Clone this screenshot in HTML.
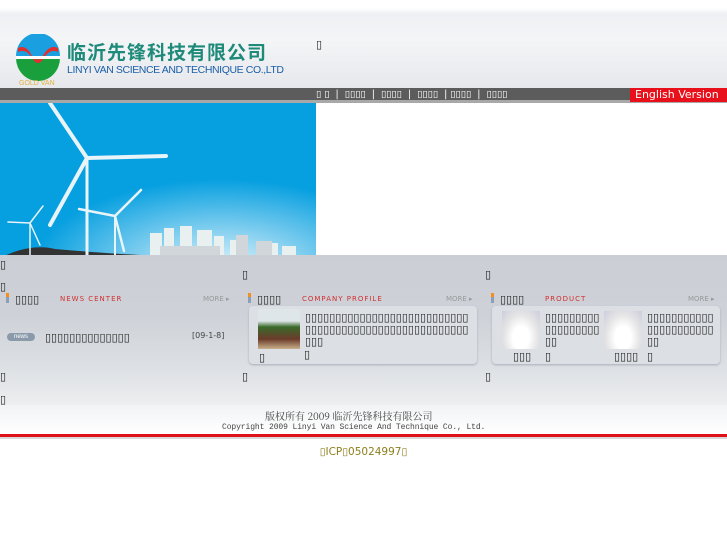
<!DOCTYPE html>
<html><head><meta charset="utf-8"><style>
*{margin:0;padding:0;box-sizing:border-box}
body{width:727px;height:545px;background:#fff;font-family:"Liberation Sans","DejaVu Sans",sans-serif;position:relative;overflow:hidden;font-size:11px;color:#222}
.a{position:absolute}
.t{font-family:"DejaVu Sans",sans-serif;white-space:nowrap}
</style></head><body>
<div class="a" style="left:0;top:0;width:727px;height:88px;background:linear-gradient(#fff 0,#fff 8px,#eef0f3 14px,#f4f5f7 40px,#e6e8ec 88px)"></div>
<svg class="a" style="left:14px;top:34px" width="50" height="52" viewBox="0 0 50 52">
<ellipse cx="24" cy="24" rx="22" ry="23" fill="#19a03c"/>
<path d="M2 22A22 23 0 0 1 46 22Z" fill="#1aa0e0"/>
<path d="M4 14Q12 10 18 22Q24 30 30 20Q36 10 44 14L44 18Q36 14 30 24Q24 34 18 24Q12 14 4 18Z" fill="#e03030"/>
<rect x="2" y="22" width="44" height="3" fill="#fff"/>
<text x="5" y="51" font-size="7" fill="#e0b040" font-family="Liberation Sans">GOLD VAN</text>
</svg>
<div class="a t" style="left:67px;top:40px;font-size:19px;font-weight:bold;color:#1e8a7a;font-family:'Noto Sans CJK SC',sans-serif;letter-spacing:1px;line-height:24px">临沂先锋科技有限公司</div>
<div class="a t" style="left:67px;top:64px;font-size:10.5px;color:#1b5fa8;font-family:'Liberation Sans',sans-serif;letter-spacing:-0.4px">LINYI VAN SCIENCE AND TECHNIQUE CO.,LTD</div>
<div class="a t" style="left:316px;top:38px;font-size:11px">▯</div>
<div class="a" style="left:0;top:88px;width:727px;height:12px;background:#5c5c5c"></div>
<div class="a" style="left:0;top:100px;width:727px;height:3px;background:#a8a8a8"></div>
<div class="a t" style="left:316px;top:89px;font-size:9.5px;color:#fff;word-spacing:0px">▯ ▯ &nbsp;| &nbsp;▯▯▯▯ &nbsp;| &nbsp;▯▯▯▯ &nbsp;| &nbsp;▯▯▯▯ &nbsp;| ▯▯▯▯ &nbsp;| &nbsp;▯▯▯▯</div>
<div class="a" style="left:630px;top:88px;width:97px;height:14px;background:#e8101a"></div>
<div class="a t" style="left:635px;top:88px;font-size:11px;color:#fff;font-family:'DejaVu Sans'">English Version</div>
<svg class="a" style="left:0;top:103px" width="316" height="152" viewBox="0 0 316 152">
<defs><radialGradient id="g" cx="0.7" cy="1.1" r="0.6"><stop offset="0" stop-color="#e8f6fc"/><stop offset="1" stop-color="#069fe0"/></radialGradient></defs>
<rect width="316" height="152" fill="#069fe0"/>
<rect width="316" height="152" fill="url(#g)"/>
<path d="M0 155Q30 140 55 146Q100 150 140 152L0 152Z" fill="#333"/>
<g fill="#e8f0f0">
<rect x="150" y="130" width="12" height="22"/><rect x="164" y="125" width="10" height="27"/><rect x="180" y="123" width="12" height="29"/><rect x="197" y="127" width="15" height="25"/><rect x="214" y="133" width="10" height="19"/><rect x="230" y="137" width="14" height="15"/><rect x="256" y="140" width="22" height="12"/><rect x="282" y="143" width="14" height="9"/>
</g>
<g fill="#d0d6da"><rect x="236" y="132" width="12" height="20"/><rect x="256" y="138" width="16" height="14"/><rect x="160" y="143" width="60" height="9"/></g>
<g stroke="#e8f4f8" fill="none" stroke-linecap="round">
<line x1="87" y1="55" x2="87" y2="152" stroke-width="3"/>
<path d="M87 55L50 0M87 55L166 53M87 55L50 122" stroke-width="4"/>
<line x1="115" y1="113" x2="115" y2="152" stroke-width="2"/>
<path d="M115 113L141 87M115 113L79 106M115 113L124 148" stroke-width="2.5"/>
<line x1="30" y1="120" x2="30" y2="152" stroke-width="1.5"/>
<path d="M30 120L43 103M30 120L8 119M30 120L40 142" stroke-width="1.5"/>
</g>
</svg>
<div class="a" style="left:0;top:255px;width:727px;height:150px;background:linear-gradient(#cbcfd5,#ced2d8 60px,#dcdfe3 110px,#eceef0 150px)"></div>
<div class="a t" style="left:0;top:258px">▯</div>
<div class="a t" style="left:0;top:280px">▯</div>
<div class="a t" style="left:242px;top:268px">▯</div>
<div class="a t" style="left:485px;top:268px">▯</div>
<div class="a t" style="left:0;top:370px">▯</div><div class="a t" style="left:242px;top:370px">▯</div><div class="a t" style="left:485px;top:370px">▯</div>
<div class="a t" style="left:0;top:393px">▯</div>
<div class="a" style="left:6px;top:293px;width:3px;height:10px;background:linear-gradient(#f39020 40%,#8aa0b8 40%)"></div>
<div class="a t" style="left:15px;top:293px;font-size:11px">▯▯▯▯</div>
<div class="a t" style="left:60px;top:295px;font-size:7px;color:#d03030;letter-spacing:1px">NEWS CENTER</div>
<div class="a t" style="left:203px;top:295px;font-size:7px;color:#999">MORE ▸</div>
<div class="a" style="left:248px;top:293px;width:3px;height:10px;background:linear-gradient(#f39020 40%,#8aa0b8 40%)"></div>
<div class="a t" style="left:257px;top:293px;font-size:11px">▯▯▯▯</div>
<div class="a t" style="left:302px;top:295px;font-size:7px;color:#d03030;letter-spacing:1px">COMPANY PROFILE</div>
<div class="a t" style="left:446px;top:295px;font-size:7px;color:#999">MORE ▸</div>
<div class="a" style="left:491px;top:293px;width:3px;height:10px;background:linear-gradient(#f39020 40%,#8aa0b8 40%)"></div>
<div class="a t" style="left:500px;top:293px;font-size:11px">▯▯▯▯</div>
<div class="a t" style="left:545px;top:295px;font-size:7px;color:#d03030;letter-spacing:1px">PRODUCT</div>
<div class="a t" style="left:688px;top:295px;font-size:7px;color:#999">MORE ▸</div>
<div class="a" style="left:7px;top:333px;width:28px;height:8px;border-radius:4px;background:#8a9aaa;color:#fff;font-size:6px;text-align:center;line-height:8px">news</div>
<div class="a t" style="left:45px;top:331px;font-size:11px">▯▯▯▯▯▯▯▯▯▯▯▯▯▯</div>
<div class="a t" style="left:192px;top:331px;font-size:8px;color:#444">[09-1-8]</div>
<div class="a" style="left:249px;top:306px;width:228px;height:58px;border-radius:4px;background:#dcdfe3;box-shadow:0 1px 2px #aab"></div>
<div class="a" style="left:258px;top:309px;width:42px;height:40px;background:linear-gradient(#dfe6ea 0,#dfe6ea 30%,#3a6a2a 45%,#6b3a2a 75%,#c8b08a 100%)"></div>
<div class="a" style="left:305px;top:312px;width:165px;font-size:11px;line-height:12px;font-family:'DejaVu Sans',sans-serif;word-break:break-all">▯▯▯▯▯▯▯▯▯▯▯▯▯▯▯▯▯▯▯▯▯▯▯▯▯▯▯▯▯▯▯▯▯▯▯▯▯▯▯▯▯▯▯▯▯▯▯▯▯▯▯▯▯▯▯▯▯</div>
<div class="a t" style="left:259px;top:351px">▯</div><div class="a t" style="left:304px;top:348px">▯</div>
<div class="a" style="left:492px;top:306px;width:228px;height:58px;border-radius:4px;background:#dcdfe3;box-shadow:0 1px 2px #aab"></div>
<div class="a" style="left:502px;top:311px;width:38px;height:38px;background:radial-gradient(ellipse at 50% 70%,#fff 30%,#e6e6e6 60%,#ccd 100%)"></div>
<div class="a" style="left:604px;top:311px;width:38px;height:38px;background:radial-gradient(ellipse at 50% 70%,#fff 30%,#e6e6e6 60%,#ccd 100%)"></div>
<div class="a" style="left:545px;top:312px;width:56px;font-size:11px;line-height:12px;font-family:'DejaVu Sans';word-break:break-all">▯▯▯▯▯▯▯▯▯▯▯▯▯▯▯▯▯▯▯▯</div>
<div class="a" style="left:647px;top:312px;width:68px;font-size:11px;line-height:12px;font-family:'DejaVu Sans';word-break:break-all">▯▯▯▯▯▯▯▯▯▯▯▯▯▯▯▯▯▯▯▯▯▯▯▯</div>
<div class="a t" style="left:513px;top:350px;font-weight:bold">▯▯▯</div><div class="a t" style="left:545px;top:350px">▯</div>
<div class="a t" style="left:614px;top:350px;font-weight:bold">▯▯▯▯</div><div class="a t" style="left:647px;top:350px">▯</div>
<div class="a" style="left:0;top:405px;width:727px;height:29px;background:linear-gradient(#f2f3f5,#fff)"></div>
<div class="a t" style="left:265px;top:408px;font-size:10px;color:#444;font-family:'Noto Serif CJK SC',serif">版权所有 2009 临沂先锋科技有限公司</div>
<div class="a t" style="left:222px;top:423px;font-size:8px;color:#444;font-family:'Liberation Mono',monospace;letter-spacing:-0.1px">Copyright 2009 Linyi Van Science And Technique Co., Ltd.</div>
<div class="a" style="left:0;top:434px;width:727px;height:3px;background:#e0101a"></div>
<div class="a" style="left:0;top:437px;width:727px;height:2px;background:#d8d8d8"></div>
<div class="a t" style="left:0;width:727px;top:446px;text-align:center;font-size:10.5px;color:#8c7e1c">▯ICP▯05024997▯</div>
</body></html>
